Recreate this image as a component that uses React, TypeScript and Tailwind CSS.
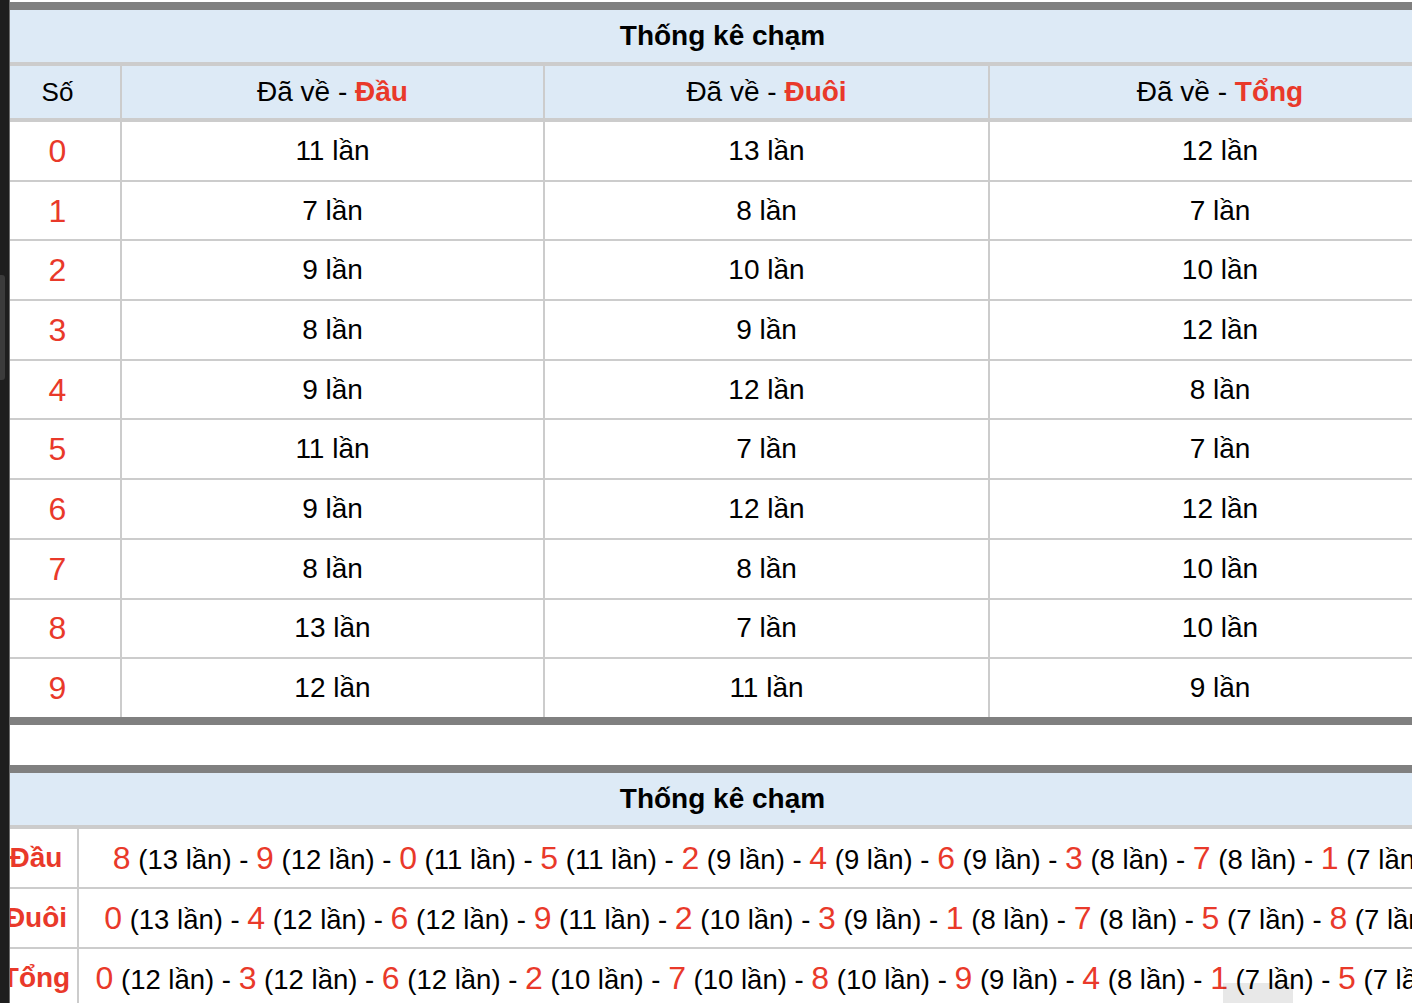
import React from "react";

const rows = [
  { so: 0, dau: 11, duoi: 13, tong: 12 },
  { so: 1, dau: 7, duoi: 8, tong: 7 },
  { so: 2, dau: 9, duoi: 10, tong: 10 },
  { so: 3, dau: 8, duoi: 9, tong: 12 },
  { so: 4, dau: 9, duoi: 12, tong: 8 },
  { so: 5, dau: 11, duoi: 7, tong: 7 },
  { so: 6, dau: 9, duoi: 12, tong: 12 },
  { so: 7, dau: 8, duoi: 8, tong: 10 },
  { so: 8, dau: 13, duoi: 7, tong: 10 },
  { so: 9, dau: 12, duoi: 11, tong: 9 },
];

const summary: { label: string; items: [number, number][] }[] = [
  { label: "Đầu", items: [[8, 13], [9, 12], [0, 11], [5, 11], [2, 9], [4, 9], [6, 9], [3, 8], [7, 8], [1, 7]] },
  { label: "Đuôi", items: [[0, 13], [4, 12], [6, 12], [9, 11], [2, 10], [3, 9], [1, 8], [7, 8], [5, 7], [8, 7]] },
  { label: "Tổng", items: [[0, 12], [3, 12], [6, 12], [2, 10], [7, 10], [8, 10], [9, 9], [4, 8], [1, 7], [5, 7]] },
];

function HeadCell({ kind }: { kind: string }) {
  return (
    <div className="flex items-center justify-center bg-[#ddeaf6] text-[28px]">
      Đã về -&nbsp;<b className="text-[#e9392a]">{kind}</b>
    </div>
  );
}

export default function App() {
  return (
    <div className="flex min-h-screen bg-white font-['Liberation_Sans',Arial,sans-serif] text-black">
      <div className="relative w-[10px] shrink-0 border-r border-[#6b6b6b] bg-[#1e1e1e]">
        <div className="absolute left-0 top-[275px] h-[105px] w-[5px] rounded-r-[3px] bg-[#3b3b3b]" />
      </div>

      <div className="relative flex-1 overflow-hidden pt-[2px]">
        {/* bảng 1 */}
        <div className="-ml-[15px] w-[1455px] border-y-[8px] border-[#808080] bg-[#cccccc]">
          <div className="flex h-[52px] items-center justify-center bg-[#ddeaf6] text-[28px] font-bold">Thống kê chạm</div>
          <div className="mt-[4px] grid h-[52px] grid-cols-[125px_421px_443px_460px] gap-x-[2px]">
            <div className="flex items-center justify-center bg-[#ddeaf6] text-[26px]">Số</div>
            <HeadCell kind="Đầu" />
            <HeadCell kind="Đuôi" />
            <HeadCell kind="Tổng" />
          </div>
          <div className="mt-[4px] grid grid-cols-[125px_421px_443px_460px] gap-[2px]">
            {rows.map((r) => (
              <React.Fragment key={r.so}>
                <div className="flex h-[57.7px] items-center justify-center bg-white text-[32px] text-[#e9392a]">{r.so}</div>
                <div className="flex h-[57.7px] items-center justify-center bg-white text-[28px]">{r.dau} lần</div>
                <div className="flex h-[57.7px] items-center justify-center bg-white text-[28px]">{r.duoi} lần</div>
                <div className="flex h-[57.7px] items-center justify-center bg-white text-[28px]">{r.tong} lần</div>
              </React.Fragment>
            ))}
          </div>
        </div>

        <div className="h-[40px]" />

        {/* bảng 2 */}
        <div className="-ml-[15px] w-[1455px] border-t-[8px] border-[#808080] bg-[#cccccc]">
          <div className="flex h-[52px] items-center justify-center bg-[#ddeaf6] text-[28px] font-bold">Thống kê chạm</div>
          <div className="mt-[4px] grid grid-cols-[82px_1fr] gap-[2px]">
            {summary.map((s) => (
              <React.Fragment key={s.label}>
                <div className="flex h-[58px] items-center justify-center whitespace-nowrap bg-white text-[28px] font-bold text-[#e9392a]">
                  {s.label}
                </div>
                <div className="flex h-[58px] items-center justify-center whitespace-nowrap bg-white pl-[8px] text-[27.5px]">
                  <span>
                    {s.items.map(([d, n], i) => (
                      <React.Fragment key={d}>
                        {i > 0 && " - "}
                        <span className="text-[32px] text-[#e9392a]">{d}</span> ({n} lần)
                      </React.Fragment>
                    ))}
                  </span>
                </div>
              </React.Fragment>
            ))}
          </div>
        </div>

        <div className="absolute left-[1213px] top-[983px] h-[20px] w-[70px] bg-black/[0.09]" />
      </div>
    </div>
  );
}
